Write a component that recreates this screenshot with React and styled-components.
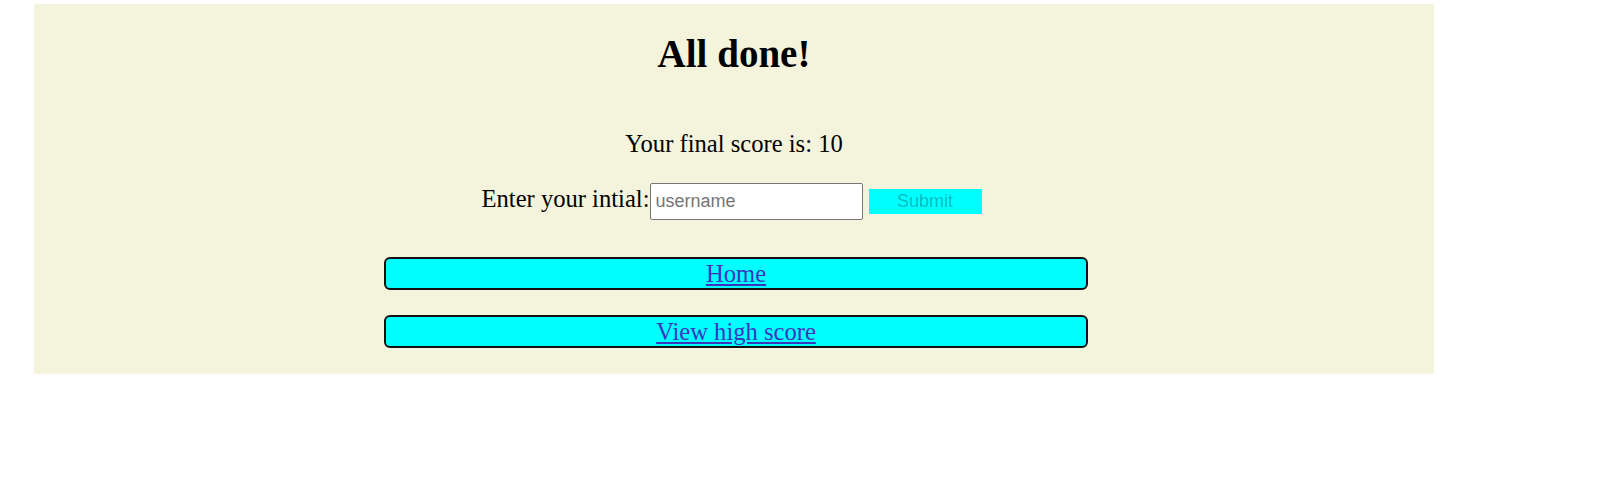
import React from "react";
import styled, { createGlobalStyle } from "styled-components";

const GlobalStyle = createGlobalStyle`
  body {
    margin: 0;
    background: #ffffff;
    font-family: "Liberation Serif", "Times New Roman", serif;
    color: #000000;
  }
`;

const App = () => {
  return (
    <>
      <GlobalStyle />
      <Panel>
        <Title>All done!</Title>
        <Score>Your final score is: 10</Score>
        <ScoreForm onSubmit={(e) => e.preventDefault()}>
          <Label htmlFor='initials'>Enter your intial:</Label>
          <Input id='initials' type='text' placeholder='username' />
          <Submit type='submit' disabled>
            Submit
          </Submit>
        </ScoreForm>
        <NavButton first>
          <a href='#home'>Home</a>
        </NavButton>
        <NavButton>
          <a href='#highscores'>View high score</a>
        </NavButton>
      </Panel>
    </>
  );
};

const Panel = styled.main`
  display: flow-root;
  width: 1400px;
  margin: 4px 0 0 34px;
  padding-bottom: 26px;
  background: #f4f4dc;
  text-align: center;
`;

const Title = styled.h1`
  margin: 27px 0 0;
  font-size: 39px;
  font-weight: bold;
`;

const Score = styled.p`
  margin: 54px 0 0;
  font-size: 24.6px;
`;

const ScoreForm = styled.form`
  margin-top: 25px;
  padding-right: 5px;
  font-size: 24.6px;
`;

const Label = styled.label`
  font-size: 24.6px;
`;

const Input = styled.input`
  box-sizing: border-box;
  width: 213px;
  height: 37px;
  padding: 0 5px;
  border: 1px solid #767676;
  border-radius: 2px;
  background: #ffffff;
  font-family: "Liberation Sans", Arial, sans-serif;
  font-size: 18px;

  &::placeholder {
    color: #757575;
  }
`;

const Submit = styled.button`
  box-sizing: border-box;
  width: 113px;
  height: 25px;
  margin-left: 6px;
  padding: 0;
  border: none;
  background: #00ffff;
  color: rgba(16, 16, 16, 0.3);
  font-family: "Liberation Sans", Arial, sans-serif;
  font-size: 18px;
`;

const NavButton = styled.div`
  box-sizing: border-box;
  width: 704px;
  height: 33px;
  margin: ${(p) => (p.first ? "37px" : "25px")} 0 0 350px;
  border: 2px solid #111111;
  border-radius: 6px;
  background: #00ffff;
  line-height: 29px;

  a {
    font-size: 24.6px;
    color: #3a35bd;
    text-decoration: underline;
  }
`;

export default App;
